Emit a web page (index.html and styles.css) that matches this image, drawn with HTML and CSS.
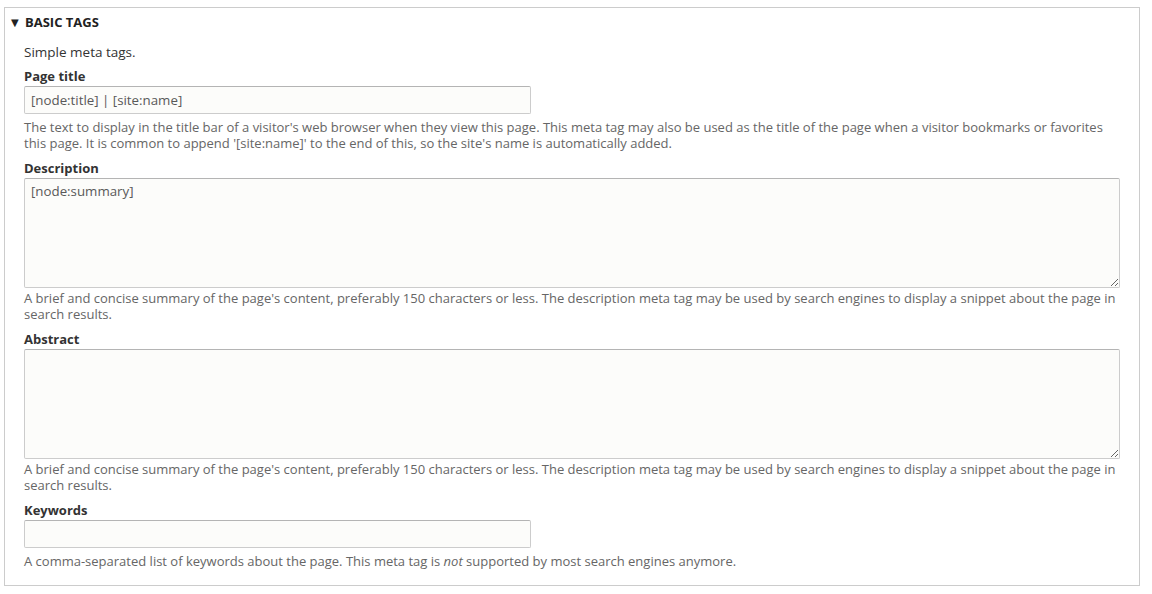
FILE: index.html
```html
<!DOCTYPE html>
<html>
<head>
    <link rel="stylesheet" href="styles.css">
</head>
<body>
    <div class="fieldset">
        <div class="legend"><span class="arrow">&#9660;</span>BASIC TAGS</div>
        <div class="fieldset-wrapper">
            <div class="intro">Simple meta tags.</div>

            <div class="form-item">
                <label>Page title</label>
                <input type="text" class="form-text" value="[node:title] | [site:name]">
                <div class="description">The text to display in the title bar of a visitor's web browser when they view this page. This meta tag may also be used as the title of the page when a visitor bookmarks or favorites this page. It is common to append '[site:name]' to the end of this, so the site's name is automatically added.</div>
            </div>

            <div class="form-item">
                <label>Description</label>
                <textarea class="form-textarea">[node:summary]</textarea>
                <div class="description">A brief and concise summary of the page's content, preferably 150 characters or less. The description meta tag may be used by search engines to display a snippet about the page in search results.</div>
            </div>

            <div class="form-item">
                <label>Abstract</label>
                <textarea class="form-textarea"></textarea>
                <div class="description">A brief and concise summary of the page's content, preferably 150 characters or less. The description meta tag may be used by search engines to display a snippet about the page in search results.</div>
            </div>

            <div class="form-item">
                <label>Keywords</label>
                <input type="text" class="form-text" value="">
                <div class="description">A comma-separated list of keywords about the page. This meta tag is <em>not</em> supported by most search engines anymore.</div>
            </div>
        </div>
    </div>
</body>
</html>
```

FILE: styles.css
```css
body {
    margin: 0;
    padding: 7px 12px 8px 4px;
    font-family: "Open Sans", "DejaVu Sans", sans-serif;
    font-size: 13px;
    color: #333;
    background: #fff;
}
.fieldset {
    border: 1px solid #ccc;
}
.legend {
    padding: 5px 0 0 6px;
    line-height: 18px;
    font-size: 13px;
    font-weight: bold;
    color: #222;
}
.legend .arrow {
    font-size: 10px;
    display: inline-block;
    width: 14px;
    vertical-align: 1px;
}
.fieldset-wrapper {
    padding: 12px 19px 16px 19px;
}
.intro {
    font-size: 13.5px;
    line-height: 18px;
    margin-bottom: 6px;
}
.form-item {
    margin-bottom: 8px;
}
.form-item:last-child {
    margin-bottom: 0;
}
.form-item label {
    display: block;
    font-weight: bold;
    line-height: 18px;
    margin-bottom: 1px;
}
.form-text,
.form-textarea {
    display: block;
    box-sizing: border-box;
    border: 1px solid #ccc;
    border-top-color: #b4b4b4;
    border-radius: 2px;
    background: #fcfcfa;
    font-family: "Open Sans", "DejaVu Sans", sans-serif;
    font-size: 13.3px;
    color: #595959;
    padding: 4px 6px;
}
.form-text {
    width: 507px;
    height: 28px;
}
.form-textarea {
    width: 100%;
    height: 110px;
    resize: vertical;
    padding: 3px 6px;
}
.description {
    margin-top: 2px;
    font-size: 13px;
    line-height: 16px;
    color: #666;
}
.form-text + .description {
    margin-top: 5px;
}
```
